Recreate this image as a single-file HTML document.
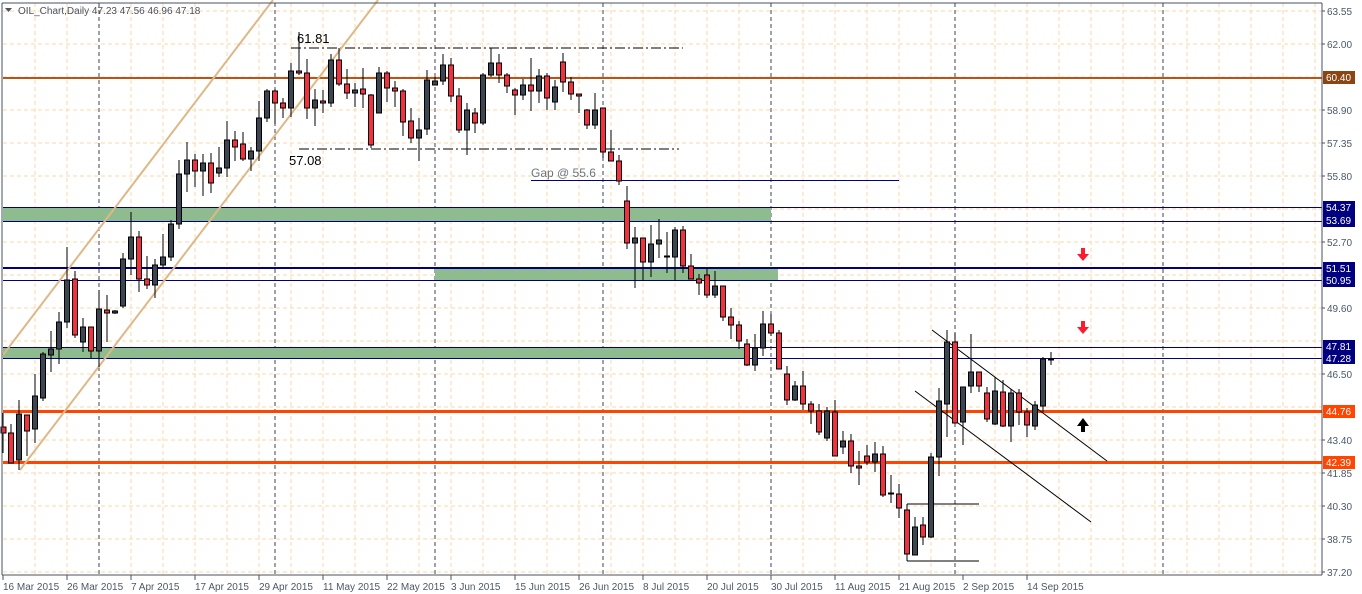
<!DOCTYPE html>
<html><head><meta charset="utf-8"><style>
html,body{margin:0;padding:0;background:#fff;width:1362px;height:594px;overflow:hidden}
svg{display:block}
text{font-family:"Liberation Sans",sans-serif;font-size:10px}
</style></head><body>
<svg width="1362" height="594" viewBox="0 0 1362 594" xmlns="http://www.w3.org/2000/svg" shape-rendering="crispEdges">
<rect x="0" y="0" width="1362" height="594" fill="#fff"/>
<g stroke="#fbd9a8" stroke-dasharray="4,3" stroke-width="1">
<line x1="3" y1="11" x2="1322" y2="11"/><line x1="3" y1="44" x2="1322" y2="44"/><line x1="3" y1="77" x2="1322" y2="77"/>
<line x1="3" y1="110" x2="1322" y2="110"/><line x1="3" y1="143" x2="1322" y2="143"/><line x1="3" y1="176" x2="1322" y2="176"/>
<line x1="3" y1="209" x2="1322" y2="209"/><line x1="3" y1="242" x2="1322" y2="242"/><line x1="3" y1="275" x2="1322" y2="275"/>
<line x1="3" y1="308" x2="1322" y2="308"/><line x1="3" y1="341" x2="1322" y2="341"/><line x1="3" y1="374" x2="1322" y2="374"/>
<line x1="3" y1="407" x2="1322" y2="407"/><line x1="3" y1="440" x2="1322" y2="440"/><line x1="3" y1="473" x2="1322" y2="473"/>
<line x1="3" y1="506" x2="1322" y2="506"/><line x1="3" y1="539" x2="1322" y2="539"/><line x1="3" y1="572" x2="1322" y2="572"/>
</g>
<g stroke="#fbd9a8" stroke-dasharray="4,3" stroke-width="1">
<line x1="35" y1="3" x2="35" y2="574"/><line x1="67" y1="3" x2="67" y2="574"/><line x1="131" y1="3" x2="131" y2="574"/><line x1="163" y1="3" x2="163" y2="574"/><line x1="195" y1="3" x2="195" y2="574"/><line x1="227" y1="3" x2="227" y2="574"/><line x1="259" y1="3" x2="259" y2="574"/><line x1="291" y1="3" x2="291" y2="574"/><line x1="323" y1="3" x2="323" y2="574"/><line x1="355" y1="3" x2="355" y2="574"/><line x1="387" y1="3" x2="387" y2="574"/><line x1="419" y1="3" x2="419" y2="574"/><line x1="451" y1="3" x2="451" y2="574"/><line x1="483" y1="3" x2="483" y2="574"/><line x1="515" y1="3" x2="515" y2="574"/><line x1="547" y1="3" x2="547" y2="574"/><line x1="579" y1="3" x2="579" y2="574"/><line x1="611" y1="3" x2="611" y2="574"/><line x1="643" y1="3" x2="643" y2="574"/><line x1="675" y1="3" x2="675" y2="574"/><line x1="707" y1="3" x2="707" y2="574"/><line x1="739" y1="3" x2="739" y2="574"/><line x1="803" y1="3" x2="803" y2="574"/><line x1="835" y1="3" x2="835" y2="574"/><line x1="867" y1="3" x2="867" y2="574"/><line x1="899" y1="3" x2="899" y2="574"/><line x1="931" y1="3" x2="931" y2="574"/><line x1="995" y1="3" x2="995" y2="574"/><line x1="1027" y1="3" x2="1027" y2="574"/><line x1="1059" y1="3" x2="1059" y2="574"/><line x1="1091" y1="3" x2="1091" y2="574"/><line x1="1123" y1="3" x2="1123" y2="574"/><line x1="1155" y1="3" x2="1155" y2="574"/><line x1="1187" y1="3" x2="1187" y2="574"/><line x1="1219" y1="3" x2="1219" y2="574"/><line x1="1251" y1="3" x2="1251" y2="574"/><line x1="1283" y1="3" x2="1283" y2="574"/><line x1="1315" y1="3" x2="1315" y2="574"/>
</g>
<g stroke="#3c4650" stroke-dasharray="4,3" stroke-width="1">
<line x1="99" y1="3" x2="99" y2="574"/><line x1="275" y1="3" x2="275" y2="574"/><line x1="435" y1="3" x2="435" y2="574"/><line x1="603" y1="3" x2="603" y2="574"/><line x1="771" y1="3" x2="771" y2="574"/><line x1="955" y1="3" x2="955" y2="574"/><line x1="1163" y1="3" x2="1163" y2="574"/>
</g>
<rect x="3" y="207" width="768" height="14" fill="#8fbc8f"/>
<rect x="435" y="268" width="343" height="12" fill="#8fbc8f"/>
<rect x="3" y="347" width="743" height="11" fill="#8fbc8f"/>
<rect x="3" y="77" width="1319" height="2" fill="#b5551b"/>
<g fill="#000080">
<rect x="3" y="207" width="1319" height="1"/><rect x="3" y="221" width="1319" height="1"/>
<rect x="3" y="280" width="1319" height="1"/>
<rect x="3" y="347" width="1319" height="1"/><rect x="3" y="358" width="1319" height="1"/>
<rect x="531" y="180" width="368" height="1"/>
<rect x="3" y="267" width="1319" height="2"/>
</g>
<g fill="#ff4500">
<rect x="3" y="410" width="1319" height="3"/><rect x="3" y="461" width="1319" height="3"/>
</g>
<g stroke="#000" stroke-width="1" stroke-dasharray="10,3,2,3">
<line x1="291" y1="48" x2="683" y2="48"/><line x1="299" y1="149" x2="679" y2="149"/>
</g>
<g stroke="#deb887" stroke-width="2" shape-rendering="auto">
<line x1="3" y1="355" x2="273" y2="0"/><line x1="20" y1="470" x2="378" y2="0"/>
</g>
<g stroke="#000" stroke-width="1" shape-rendering="auto">
<line x1="932" y1="330" x2="1107" y2="461"/><line x1="915" y1="391" x2="1091" y2="522"/>
</g>
<g stroke="#000" stroke-width="1">
<line x1="907" y1="504" x2="979" y2="504"/><line x1="907" y1="561" x2="979" y2="561"/><line x1="907" y1="504" x2="907" y2="561"/>
</g>
<g stroke="#000" stroke-width="1">
<line x1="3" y1="413" x2="3" y2="453"/><rect x="1" y="427" width="5" height="6" fill="#f5303e"/>
<line x1="11" y1="424" x2="11" y2="463"/><rect x="8.5" y="433" width="5" height="30" fill="#f5303e"/>
<line x1="19" y1="400" x2="19" y2="470"/><rect x="16.5" y="414" width="5" height="46" fill="#3c4652"/>
<line x1="27" y1="415" x2="27" y2="456"/><rect x="24.5" y="415" width="5" height="16" fill="#f5303e"/>
<line x1="35" y1="374" x2="35" y2="443"/><rect x="32.5" y="396" width="5" height="33" fill="#3c4652"/>
<line x1="43" y1="352" x2="43" y2="401"/><rect x="40.5" y="354" width="5" height="44" fill="#3c4652"/>
<line x1="51" y1="331" x2="51" y2="372"/><rect x="48.5" y="349" width="5" height="6" fill="#3c4652"/>
<line x1="59" y1="312" x2="59" y2="364"/><rect x="56.5" y="322" width="5" height="27" fill="#3c4652"/>
<line x1="67" y1="247" x2="67" y2="328"/><rect x="64.5" y="280" width="5" height="42" fill="#3c4652"/>
<line x1="75" y1="271" x2="75" y2="338"/><rect x="72.5" y="279" width="5" height="56" fill="#f5303e"/>
<line x1="83" y1="318" x2="83" y2="352"/><rect x="80.5" y="327" width="5" height="15" fill="#3c4652"/>
<line x1="91" y1="327" x2="91" y2="358"/><rect x="88.5" y="327" width="5" height="24" fill="#f5303e"/>
<line x1="99" y1="290" x2="99" y2="367"/><rect x="96.5" y="309" width="5" height="42" fill="#3c4652"/>
<line x1="107" y1="295" x2="107" y2="342"/><rect x="104.5" y="310" width="5" height="3" fill="#f5303e"/>
<line x1="115" y1="310" x2="115" y2="314"/><rect x="112.5" y="311" width="5" height="2" fill="#3c4652"/>
<line x1="123" y1="253" x2="123" y2="308"/><rect x="120.5" y="259" width="5" height="47" fill="#3c4652"/>
<line x1="131" y1="212" x2="131" y2="275"/><rect x="128.5" y="237" width="5" height="22" fill="#3c4652"/>
<line x1="139" y1="231" x2="139" y2="292"/><rect x="136.5" y="237" width="5" height="42" fill="#f5303e"/>
<line x1="147" y1="256" x2="147" y2="289"/><rect x="144.5" y="279" width="5" height="6" fill="#f5303e"/>
<line x1="155" y1="259" x2="155" y2="298"/><rect x="152.5" y="265" width="5" height="20" fill="#3c4652"/>
<line x1="163" y1="234" x2="163" y2="269"/><rect x="160.5" y="257" width="5" height="8" fill="#3c4652"/>
<line x1="171" y1="220" x2="171" y2="261"/><rect x="168.5" y="224" width="5" height="33" fill="#3c4652"/>
<line x1="179" y1="160" x2="179" y2="229"/><rect x="176.5" y="174" width="5" height="50" fill="#3c4652"/>
<line x1="187" y1="142" x2="187" y2="192"/><rect x="184.5" y="160" width="5" height="14" fill="#3c4652"/>
<line x1="195" y1="154" x2="195" y2="187"/><rect x="192.5" y="160" width="5" height="11" fill="#f5303e"/>
<line x1="203" y1="154" x2="203" y2="196"/><rect x="200.5" y="163" width="5" height="8" fill="#3c4652"/>
<line x1="211" y1="153" x2="211" y2="193"/><rect x="208.5" y="163" width="5" height="20" fill="#f5303e"/>
<line x1="219" y1="147" x2="219" y2="177"/><rect x="216.5" y="168" width="5" height="5" fill="#3c4652"/>
<line x1="227" y1="121" x2="227" y2="177"/><rect x="224.5" y="140" width="5" height="28" fill="#3c4652"/>
<line x1="235" y1="131" x2="235" y2="161"/><rect x="232.5" y="140" width="5" height="7" fill="#f5303e"/>
<line x1="243" y1="132" x2="243" y2="161"/><rect x="240.5" y="144" width="5" height="15" fill="#f5303e"/>
<line x1="251" y1="147" x2="251" y2="171"/><rect x="248.5" y="151" width="5" height="8" fill="#3c4652"/>
<line x1="259" y1="101" x2="259" y2="161"/><rect x="256.5" y="118" width="5" height="33" fill="#3c4652"/>
<line x1="267" y1="89" x2="267" y2="122"/><rect x="264.5" y="91" width="5" height="27" fill="#3c4652"/>
<line x1="275" y1="89" x2="275" y2="124"/><rect x="272.5" y="91" width="5" height="12" fill="#f5303e"/>
<line x1="283" y1="98" x2="283" y2="118"/><rect x="280.5" y="103" width="5" height="5" fill="#f5303e"/>
<line x1="291" y1="63" x2="291" y2="117"/><rect x="288.5" y="71" width="5" height="37" fill="#3c4652"/>
<line x1="299" y1="32" x2="299" y2="75"/><rect x="296.5" y="71" width="5" height="2" fill="#f5303e"/>
<line x1="307" y1="59" x2="307" y2="119"/><rect x="304.5" y="73" width="5" height="35" fill="#f5303e"/>
<line x1="315" y1="89" x2="315" y2="126"/><rect x="312.5" y="100" width="5" height="8" fill="#3c4652"/>
<line x1="323" y1="90" x2="323" y2="113"/><rect x="320.5" y="101" width="5" height="2" fill="#f5303e"/>
<line x1="331" y1="54" x2="331" y2="107"/><rect x="328.5" y="60" width="5" height="43" fill="#3c4652"/>
<line x1="339" y1="48" x2="339" y2="86"/><rect x="336.5" y="60" width="5" height="24" fill="#f5303e"/>
<line x1="347" y1="69" x2="347" y2="99"/><rect x="344.5" y="84" width="5" height="9" fill="#f5303e"/>
<line x1="355" y1="83" x2="355" y2="107"/><rect x="352.5" y="90" width="5" height="3" fill="#3c4652"/>
<line x1="363" y1="68" x2="363" y2="108"/><rect x="360.5" y="89" width="5" height="5" fill="#f5303e"/>
<line x1="371" y1="94" x2="371" y2="148"/><rect x="368.5" y="95" width="5" height="50" fill="#f5303e"/>
<line x1="379" y1="67" x2="379" y2="113"/><rect x="376.5" y="73" width="5" height="40" fill="#3c4652"/>
<line x1="387" y1="71" x2="387" y2="102"/><rect x="384.5" y="73" width="5" height="15" fill="#f5303e"/>
<line x1="395" y1="81" x2="395" y2="107"/><rect x="392.5" y="88" width="5" height="3" fill="#f5303e"/>
<line x1="403" y1="89" x2="403" y2="136"/><rect x="400.5" y="91" width="5" height="31" fill="#f5303e"/>
<line x1="411" y1="108" x2="411" y2="143"/><rect x="408.5" y="121" width="5" height="17" fill="#f5303e"/>
<line x1="419" y1="118" x2="419" y2="161"/><rect x="416.5" y="130" width="5" height="8" fill="#3c4652"/>
<line x1="427" y1="70" x2="427" y2="135"/><rect x="424.5" y="80" width="5" height="49" fill="#3c4652"/>
<line x1="435" y1="77" x2="435" y2="85"/><rect x="432.5" y="81" width="5" height="4" fill="#3c4652"/>
<line x1="443" y1="54" x2="443" y2="85"/><rect x="440.5" y="65" width="5" height="16" fill="#3c4652"/>
<line x1="451" y1="58" x2="451" y2="102"/><rect x="448.5" y="65" width="5" height="31" fill="#f5303e"/>
<line x1="459" y1="88" x2="459" y2="133"/><rect x="456.5" y="96" width="5" height="34" fill="#f5303e"/>
<line x1="467" y1="103" x2="467" y2="155"/><rect x="464.5" y="110" width="5" height="20" fill="#3c4652"/>
<line x1="475" y1="108" x2="475" y2="133"/><rect x="472.5" y="113" width="5" height="10" fill="#f5303e"/>
<line x1="483" y1="73" x2="483" y2="125"/><rect x="480.5" y="75" width="5" height="48" fill="#3c4652"/>
<line x1="491" y1="48" x2="491" y2="77"/><rect x="488.5" y="63" width="5" height="12" fill="#3c4652"/>
<line x1="499" y1="54" x2="499" y2="83"/><rect x="496.5" y="63" width="5" height="12" fill="#f5303e"/>
<line x1="507" y1="73" x2="507" y2="93"/><rect x="504.5" y="75" width="5" height="11" fill="#f5303e"/>
<line x1="515" y1="88" x2="515" y2="115"/><rect x="512.5" y="90" width="5" height="5" fill="#f5303e"/>
<line x1="523" y1="79" x2="523" y2="100"/><rect x="520.5" y="85" width="5" height="10" fill="#3c4652"/>
<line x1="531" y1="58" x2="531" y2="111"/><rect x="528.5" y="85" width="5" height="6" fill="#f5303e"/>
<line x1="539" y1="69" x2="539" y2="103"/><rect x="536.5" y="76" width="5" height="15" fill="#3c4652"/>
<line x1="547" y1="73" x2="547" y2="110"/><rect x="544.5" y="76" width="5" height="22" fill="#f5303e"/>
<line x1="555" y1="80" x2="555" y2="110"/><rect x="552.5" y="87" width="5" height="15" fill="#3c4652"/>
<line x1="563" y1="53" x2="563" y2="92"/><rect x="560.5" y="62" width="5" height="20" fill="#f5303e"/>
<line x1="571" y1="77" x2="571" y2="100"/><rect x="568.5" y="82" width="5" height="12" fill="#f5303e"/>
<line x1="579" y1="94" x2="579" y2="113"/><rect x="576.5" y="94" width="5" height="2" fill="#f5303e"/>
<line x1="587" y1="109" x2="587" y2="129"/><rect x="584.5" y="110" width="5" height="15" fill="#f5303e"/>
<line x1="595" y1="93" x2="595" y2="129"/><rect x="592.5" y="110" width="5" height="15" fill="#3c4652"/>
<line x1="603" y1="108" x2="603" y2="158"/><rect x="600.5" y="108" width="5" height="44" fill="#f5303e"/>
<line x1="611" y1="130" x2="611" y2="161"/><rect x="608.5" y="152" width="5" height="9" fill="#f5303e"/>
<line x1="619" y1="155" x2="619" y2="185"/><rect x="616.5" y="161" width="5" height="20" fill="#f5303e"/>
<line x1="627" y1="186" x2="627" y2="249"/><rect x="624.5" y="201" width="5" height="42" fill="#f5303e"/>
<line x1="635" y1="227" x2="635" y2="288"/><rect x="632.5" y="238" width="5" height="5" fill="#3c4652"/>
<line x1="643" y1="238" x2="643" y2="281"/><rect x="640.5" y="238" width="5" height="24" fill="#f5303e"/>
<line x1="651" y1="225" x2="651" y2="277"/><rect x="648.5" y="244" width="5" height="18" fill="#3c4652"/>
<line x1="659" y1="219" x2="659" y2="258"/><rect x="656.5" y="240" width="5" height="4" fill="#3c4652"/>
<line x1="667" y1="232" x2="667" y2="273"/><rect x="664.5" y="256" width="5" height="1" fill="#3c4652"/>
<line x1="675" y1="227" x2="675" y2="281"/><rect x="672.5" y="230" width="5" height="27" fill="#3c4652"/>
<line x1="683" y1="226" x2="683" y2="273"/><rect x="680.5" y="230" width="5" height="36" fill="#f5303e"/>
<line x1="691" y1="254" x2="691" y2="279"/><rect x="688.5" y="266" width="5" height="13" fill="#f5303e"/>
<line x1="699" y1="274" x2="699" y2="295"/><rect x="696.5" y="279" width="5" height="4" fill="#f5303e"/>
<line x1="707" y1="269" x2="707" y2="298"/><rect x="704.5" y="275" width="5" height="20" fill="#f5303e"/>
<line x1="715" y1="271" x2="715" y2="298"/><rect x="712.5" y="286" width="5" height="9" fill="#3c4652"/>
<line x1="723" y1="286" x2="723" y2="321"/><rect x="720.5" y="286" width="5" height="31" fill="#f5303e"/>
<line x1="731" y1="308" x2="731" y2="339"/><rect x="728.5" y="317" width="5" height="8" fill="#f5303e"/>
<line x1="739" y1="321" x2="739" y2="349"/><rect x="736.5" y="325" width="5" height="16" fill="#f5303e"/>
<line x1="747" y1="339" x2="747" y2="366"/><rect x="744.5" y="344" width="5" height="21" fill="#f5303e"/>
<line x1="755" y1="334" x2="755" y2="371"/><rect x="752.5" y="348" width="5" height="17" fill="#3c4652"/>
<line x1="763" y1="311" x2="763" y2="356"/><rect x="760.5" y="324" width="5" height="24" fill="#3c4652"/>
<line x1="771" y1="314" x2="771" y2="336"/><rect x="768.5" y="324" width="5" height="9" fill="#f5303e"/>
<line x1="779" y1="330" x2="779" y2="369"/><rect x="776.5" y="333" width="5" height="36" fill="#f5303e"/>
<line x1="787" y1="366" x2="787" y2="405"/><rect x="784.5" y="374" width="5" height="26" fill="#f5303e"/>
<line x1="795" y1="381" x2="795" y2="401"/><rect x="792.5" y="386" width="5" height="14" fill="#3c4652"/>
<line x1="803" y1="371" x2="803" y2="410"/><rect x="800.5" y="386" width="5" height="18" fill="#f5303e"/>
<line x1="811" y1="401" x2="811" y2="424"/><rect x="808.5" y="404" width="5" height="7" fill="#f5303e"/>
<line x1="819" y1="404" x2="819" y2="435"/><rect x="816.5" y="411" width="5" height="21" fill="#f5303e"/>
<line x1="827" y1="407" x2="827" y2="441"/><rect x="824.5" y="411" width="5" height="27" fill="#3c4652"/>
<line x1="835" y1="400" x2="835" y2="456"/><rect x="832.5" y="412" width="5" height="44" fill="#f5303e"/>
<line x1="843" y1="431" x2="843" y2="454"/><rect x="840.5" y="441" width="5" height="6" fill="#3c4652"/>
<line x1="851" y1="434" x2="851" y2="473"/><rect x="848.5" y="441" width="5" height="25" fill="#f5303e"/>
<line x1="859" y1="451" x2="859" y2="485"/><rect x="856.5" y="466" width="5" height="2" fill="#f5303e"/>
<line x1="867" y1="445" x2="867" y2="465"/><rect x="864.5" y="456" width="5" height="6" fill="#f5303e"/>
<line x1="875" y1="442" x2="875" y2="472"/><rect x="872.5" y="454" width="5" height="8" fill="#3c4652"/>
<line x1="883" y1="446" x2="883" y2="497"/><rect x="880.5" y="454" width="5" height="41" fill="#f5303e"/>
<line x1="891" y1="475" x2="891" y2="503"/><rect x="888.5" y="493" width="5" height="1" fill="#3c4652"/>
<line x1="899" y1="484" x2="899" y2="518"/><rect x="896.5" y="494" width="5" height="14" fill="#f5303e"/>
<line x1="907" y1="510" x2="907" y2="554"/><rect x="904.5" y="510" width="5" height="44" fill="#f5303e"/>
<line x1="915" y1="517" x2="915" y2="555"/><rect x="912.5" y="527" width="5" height="28" fill="#3c4652"/>
<line x1="923" y1="517" x2="923" y2="545"/><rect x="920.5" y="525" width="5" height="12" fill="#f5303e"/>
<line x1="931" y1="453" x2="931" y2="538"/><rect x="928.5" y="457" width="5" height="80" fill="#3c4652"/>
<line x1="939" y1="388" x2="939" y2="476"/><rect x="936.5" y="401" width="5" height="56" fill="#3c4652"/>
<line x1="947" y1="330" x2="947" y2="437"/><rect x="944.5" y="342" width="5" height="62" fill="#3c4652"/>
<line x1="955" y1="333" x2="955" y2="423"/><rect x="952.5" y="342" width="5" height="81" fill="#f5303e"/>
<line x1="963" y1="387" x2="963" y2="445"/><rect x="960.5" y="387" width="5" height="35" fill="#3c4652"/>
<line x1="971" y1="334" x2="971" y2="393"/><rect x="968.5" y="372" width="5" height="14" fill="#3c4652"/>
<line x1="979" y1="372" x2="979" y2="392"/><rect x="976.5" y="372" width="5" height="14" fill="#f5303e"/>
<line x1="987" y1="387" x2="987" y2="422"/><rect x="984.5" y="393" width="5" height="26" fill="#f5303e"/>
<line x1="995" y1="377" x2="995" y2="425"/><rect x="992.5" y="391" width="5" height="33" fill="#3c4652"/>
<line x1="1003" y1="380" x2="1003" y2="427"/><rect x="1000.5" y="392" width="5" height="34" fill="#f5303e"/>
<line x1="1011" y1="389" x2="1011" y2="442"/><rect x="1008.5" y="393" width="5" height="33" fill="#3c4652"/>
<line x1="1019" y1="389" x2="1019" y2="425"/><rect x="1016.5" y="393" width="5" height="19" fill="#f5303e"/>
<line x1="1027" y1="408" x2="1027" y2="437"/><rect x="1024.5" y="412" width="5" height="13" fill="#f5303e"/>
<line x1="1035" y1="401" x2="1035" y2="430"/><rect x="1032.5" y="405" width="5" height="21" fill="#3c4652"/>
<line x1="1043" y1="357" x2="1043" y2="412"/><rect x="1040.5" y="359" width="5" height="47" fill="#3c4652"/>
<line x1="1051" y1="352" x2="1051" y2="365"/><rect x="1048.5" y="359" width="5" height="1" fill="#3c4652"/>
</g>
<text x="297" y="43" style="font-size:13px" fill="#000">61.81</text>
<text x="289" y="165" style="font-size:13px" fill="#000">57.08</text>
<text x="531" y="177" style="font-size:12px" fill="#6b7580">Gap @ 55.6</text>
<g shape-rendering="auto">
<path d="M1081 248 h4 v6 h4 l-6 7 l-6 -7 h4 z" fill="#ff1a2e"/>
<path d="M1081 321 h4 v6 h4 l-6 7 l-6 -7 h4 z" fill="#ff1a2e"/>
<path d="M1081 432 h4 v-6 h4 l-6 -8 l-6 8 h4 z" fill="#000"/>
</g>
<line x1="2" y1="3" x2="2" y2="575" stroke="#4a5260" stroke-width="1"/>
<line x1="2" y1="3" x2="1322" y2="3" stroke="#4a5260" stroke-width="1"/>
<line x1="2" y1="575" x2="1322" y2="575" stroke="#4a5260" stroke-width="1"/>
<line x1="1322" y1="3" x2="1322" y2="575" stroke="#4a5260" stroke-width="1"/>
<path d="M5 8 h7 l-3.5 4 z" fill="#4a5260" shape-rendering="auto"/>
<text x="18" y="14" fill="#4a5260">OIL_Chart,Daily  47.23 47.56 46.96 47.18</text>
<g fill="#4a5868" stroke="none">
<text x="1327" y="15">63.55</text><text x="1327" y="48">62.00</text><text x="1327" y="114">58.90</text>
<text x="1327" y="147">57.35</text><text x="1327" y="180">55.80</text><text x="1327" y="246">52.70</text>
<text x="1327" y="312">49.60</text><text x="1327" y="378">46.50</text><text x="1327" y="444">43.40</text>
<text x="1327" y="477">41.85</text><text x="1327" y="510">40.30</text><text x="1327" y="543">38.75</text><text x="1327" y="576">37.20</text>
</g>
<g stroke="#4a5260"><line x1="1322" y1="11" x2="1325" y2="11"/><line x1="1322" y1="44" x2="1325" y2="44"/><line x1="1322" y1="110" x2="1325" y2="110"/><line x1="1322" y1="143" x2="1325" y2="143"/><line x1="1322" y1="176" x2="1325" y2="176"/><line x1="1322" y1="242" x2="1325" y2="242"/><line x1="1322" y1="308" x2="1325" y2="308"/><line x1="1322" y1="374" x2="1325" y2="374"/><line x1="1322" y1="440" x2="1325" y2="440"/><line x1="1322" y1="473" x2="1325" y2="473"/><line x1="1322" y1="506" x2="1325" y2="506"/><line x1="1322" y1="539" x2="1325" y2="539"/><line x1="1322" y1="572" x2="1325" y2="572"/></g>
<rect x="1323" y="71" width="32" height="13" fill="#8b4513"/>
<rect x="1323" y="201" width="32" height="13" fill="#000080"/>
<rect x="1323" y="214" width="32" height="13" fill="#000080"/>
<rect x="1323" y="262" width="32" height="12" fill="#000080"/>
<rect x="1323" y="274" width="32" height="13" fill="#000080"/>
<rect x="1323" y="340" width="32" height="12" fill="#000080"/>
<rect x="1323" y="352" width="32" height="12" fill="#000080"/>
<rect x="1323" y="405" width="32" height="13" fill="#ff4500"/>
<rect x="1323" y="456" width="32" height="13" fill="#ff4500"/>
<g fill="#fff">
<text x="1326" y="81">60.40</text><text x="1326" y="211">54.37</text><text x="1326" y="224">53.69</text>
<text x="1326" y="272">51.51</text><text x="1326" y="284">50.95</text><text x="1326" y="350">47.81</text>
<text x="1326" y="362">47.28</text><text x="1326" y="415">44.76</text><text x="1326" y="466">42.39</text>
</g>
<g stroke="#4a5260"><line x1="3" y1="575" x2="3" y2="580"/><line x1="67" y1="575" x2="67" y2="580"/><line x1="131" y1="575" x2="131" y2="580"/><line x1="195" y1="575" x2="195" y2="580"/><line x1="259" y1="575" x2="259" y2="580"/><line x1="323" y1="575" x2="323" y2="580"/><line x1="387" y1="575" x2="387" y2="580"/><line x1="451" y1="575" x2="451" y2="580"/><line x1="515" y1="575" x2="515" y2="580"/><line x1="579" y1="575" x2="579" y2="580"/><line x1="643" y1="575" x2="643" y2="580"/><line x1="707" y1="575" x2="707" y2="580"/><line x1="771" y1="575" x2="771" y2="580"/><line x1="835" y1="575" x2="835" y2="580"/><line x1="899" y1="575" x2="899" y2="580"/><line x1="963" y1="575" x2="963" y2="580"/><line x1="1027" y1="575" x2="1027" y2="580"/></g>
<g fill="#4a5868">
<text x="3" y="590">16 Mar 2015</text><text x="67" y="590">26 Mar 2015</text><text x="131" y="590">7 Apr 2015</text>
<text x="195" y="590">17 Apr 2015</text><text x="259" y="590">29 Apr 2015</text><text x="323" y="590">11 May 2015</text>
<text x="387" y="590">22 May 2015</text><text x="451" y="590">3 Jun 2015</text><text x="515" y="590">15 Jun 2015</text>
<text x="579" y="590">26 Jun 2015</text><text x="643" y="590">8 Jul 2015</text><text x="707" y="590">20 Jul 2015</text>
<text x="771" y="590">30 Jul 2015</text><text x="835" y="590">11 Aug 2015</text><text x="899" y="590">21 Aug 2015</text>
<text x="963" y="590">2 Sep 2015</text><text x="1027" y="590">14 Sep 2015</text>
</g>
</svg>
</body></html>
